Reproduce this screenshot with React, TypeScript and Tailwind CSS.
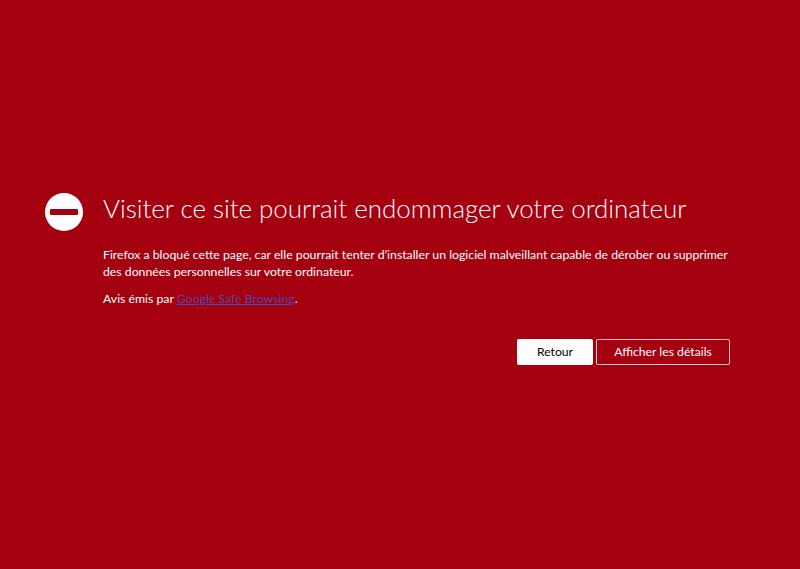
export default function App() {
  return (
    <div className="h-[569px] w-[800px] overflow-hidden bg-[#a4000f] text-white font-['Lato','Open_Sans',sans-serif] pt-[192px] pl-[45px]">
      <div className="flex">
        <div className="w-[58px] shrink-0 pt-[1px]">
          <div className="flex h-[38px] w-[38px] items-center justify-center rounded-full bg-white">
            <div className="h-[6px] w-[28px] rounded-[1px] bg-[#a4000f]" />
          </div>
        </div>
        <div className="w-[627px]">
          <h1 className="text-[25.9px] font-light leading-[32px] whitespace-nowrap">Visiter ce site pourrait endommager votre ordinateur</h1>
          <p className="mt-[22px] text-[12.28px] leading-[17px]">
            Firefox a bloqué cette page, car elle pourrait tenter d’installer un logiciel malveillant capable de dérober ou supprimer des données personnelles sur votre ordinateur.
          </p>
          <p className="mt-[10px] text-[12.28px] leading-[17px]">
            Avis émis par <a href="#" className="text-[#4f46b8] underline">Google Safe Browsing</a>.
          </p>
          <div className="mt-[32px] flex justify-end gap-[3px]">
            <button className="h-[26px] w-[76px] rounded-[2px] bg-white text-[12.2px] text-black">Retour</button>
            <button className="h-[26px] w-[134px] rounded-[2px] border border-[#f0c4c8] text-[12.2px] text-white">Afficher les détails</button>
          </div>
        </div>
      </div>
    </div>
  );
}
